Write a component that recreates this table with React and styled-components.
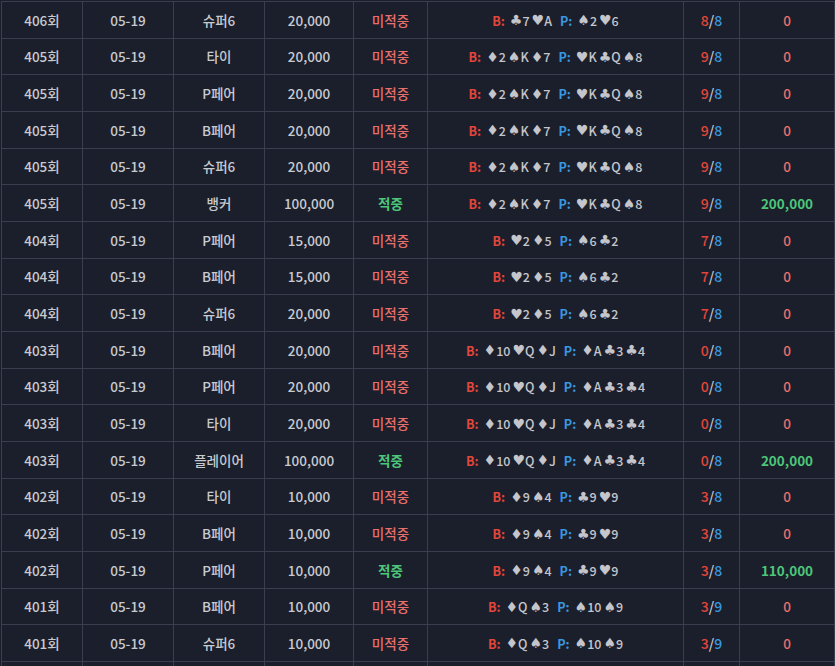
import React from "react";
import styled, { createGlobalStyle } from "styled-components";

const GlobalStyle = createGlobalStyle`
  html, body {
    margin: 0;
    padding: 0;
    background: #1b1f2b;
    overflow: hidden;
  }
  body {
    font-family: "Noto Sans CJK KR", "Noto Sans", sans-serif;
  }
`;

const BET_A = { b: [["♣", "7"], ["♥", "A"]], p: [["♠", "2"], ["♥", "6"]] };
const BET_B = { b: [["♦", "2"], ["♠", "K"], ["♦", "7"]], p: [["♥", "K"], ["♣", "Q"], ["♠", "8"]] };
const BET_C = { b: [["♥", "2"], ["♦", "5"]], p: [["♠", "6"], ["♣", "2"]] };
const BET_D = { b: [["♦", "10"], ["♥", "Q"], ["♦", "J"]], p: [["♦", "A"], ["♣", "3"], ["♣", "4"]] };
const BET_E = { b: [["♦", "9"], ["♠", "4"]], p: [["♣", "9"], ["♥", "9"]] };
const BET_F = { b: [["♦", "Q"], ["♠", "3"]], p: [["♠", "10"], ["♠", "9"]] };

const rows = [
  ["406회", "슈퍼6", "20,000", false, BET_A, "8", "8", "0"],
  ["405회", "타이", "20,000", false, BET_B, "9", "8", "0"],
  ["405회", "P페어", "20,000", false, BET_B, "9", "8", "0"],
  ["405회", "B페어", "20,000", false, BET_B, "9", "8", "0"],
  ["405회", "슈퍼6", "20,000", false, BET_B, "9", "8", "0"],
  ["405회", "뱅커", "100,000", true, BET_B, "9", "8", "200,000"],
  ["404회", "P페어", "15,000", false, BET_C, "7", "8", "0"],
  ["404회", "B페어", "15,000", false, BET_C, "7", "8", "0"],
  ["404회", "슈퍼6", "20,000", false, BET_C, "7", "8", "0"],
  ["403회", "B페어", "20,000", false, BET_D, "0", "8", "0"],
  ["403회", "P페어", "20,000", false, BET_D, "0", "8", "0"],
  ["403회", "타이", "20,000", false, BET_D, "0", "8", "0"],
  ["403회", "플레이어", "100,000", true, BET_D, "0", "8", "200,000"],
  ["402회", "타이", "10,000", false, BET_E, "3", "8", "0"],
  ["402회", "B페어", "10,000", false, BET_E, "3", "8", "0"],
  ["402회", "P페어", "10,000", true, BET_E, "3", "8", "110,000"],
  ["401회", "B페어", "10,000", false, BET_F, "3", "9", "0"],
  ["401회", "슈퍼6", "10,000", false, BET_F, "3", "9", "0"],
];

const Wrap = styled.div`
  padding: 1px 0 0 1px;
`;

const Table = styled.table`
  width: 833px;
  border-collapse: collapse;
  table-layout: fixed;
  font-size: 13.5px;
  color: #c8cad0;
`;

const Row = styled.tr`
  height: 36.667px;
`;

const Cell = styled.td`
  border: 1px solid #3a3f4f;
  text-align: center;
  padding: 0;
  white-space: nowrap;
  color: ${(p) => p.$color || "#c8cad0"};
  font-weight: ${(p) => (p.$bold ? 700 : 500)};
`;

const Cards = styled.span`
  display: inline-flex;
  align-items: center;
  font-size: 12.5px;
  font-weight: 500;
  color: #c4c6cc;
`;

const Side = styled.span`
  display: inline-flex;
  align-items: center;
  gap: 2px;
  & + & {
    margin-left: 8px;
  }
`;

const Label = styled.span`
  font-weight: 700;
  font-size: 12.5px;
  color: ${(p) => p.$color};
  margin-right: 3px;
`;

const Card = styled.span`
  display: inline-flex;
  align-items: center;
`;

const Suit = styled.span`
  font-family: "DejaVu Sans", sans-serif;
  font-size: 14px;
  line-height: 1;
`;

const Score = styled.span`
  font-size: 14px;
  font-weight: 500;
  .hit { color: #e2463a; }
  .slash { color: #c8cad0; }
  .total { color: #3a97e0; }
`;

const Hand = ({ label, color, cards }) => (
  <Side>
    <Label $color={color}>{label}:</Label>
    {cards.map(([s, v], i) => (
      <Card key={i}>
        <Suit>{s}</Suit>
        {v}
      </Card>
    ))}
  </Side>
);

export default function App() {
  return (
    <Wrap>
      <GlobalStyle />
      <Table>
        <colgroup>
          <col style={{ width: 81 }} />
          <col style={{ width: 91 }} />
          <col style={{ width: 91 }} />
          <col style={{ width: 89 }} />
          <col style={{ width: 74 }} />
          <col style={{ width: 256 }} />
          <col style={{ width: 56 }} />
          <col style={{ width: 95 }} />
        </colgroup>
        <tbody>
          {rows.map(([round, pick, amount, won, bet, hit, total, prize], i) => (
            <Row key={i}>
              <Cell>{round}</Cell>
              <Cell>05-19</Cell>
              <Cell>{pick}</Cell>
              <Cell>{amount}</Cell>
              <Cell $color={won ? "#4cc77a" : "#e7706c"} $bold={won}>
                {won ? "적중" : "미적중"}
              </Cell>
              <Cell>
                <Cards>
                  <Hand label="B" color="#e2463a" cards={bet.b} />
                  <Hand label="P" color="#3a97e0" cards={bet.p} />
                </Cards>
              </Cell>
              <Cell>
                <Score>
                  <span className="hit">{hit}</span>
                  <span className="slash">/</span>
                  <span className="total">{total}</span>
                </Score>
              </Cell>
              <Cell $color={won ? "#4cc77a" : "#e7706c"} $bold={won}>
                {prize}
              </Cell>
            </Row>
          ))}
          <Row>
            {Array.from({ length: 8 }, (_, i) => (
              <Cell key={i} />
            ))}
          </Row>
        </tbody>
      </Table>
    </Wrap>
  );
}
